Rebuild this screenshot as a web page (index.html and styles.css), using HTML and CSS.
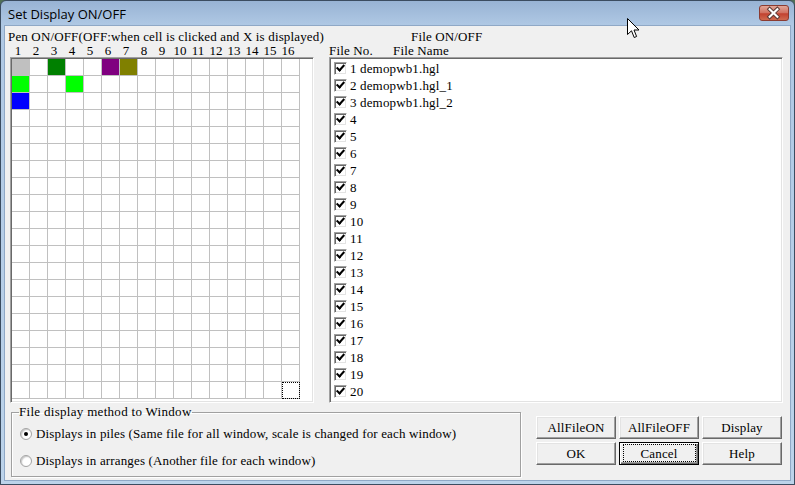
FILE: index.html
```html
<!DOCTYPE html>
<html lang="en">

<head>
    <meta charset="UTF-8">
    <title>Set Display ON/OFF</title>
    <link rel="stylesheet" href="styles.css">
</head>

<body>
    <div class="window">
        <div class="titlebar">
            <span class="title">Set Display ON/OFF</span>
            <span class="close">
                <svg width="30" height="16" viewBox="0 0 30 16">
                    <path d="M11 4 L19 12 M19 4 L11 12" stroke="#5a3a36" stroke-width="4.2" stroke-linecap="square" />
                    <path d="M11 4 L19 12 M19 4 L11 12" stroke="#fff" stroke-width="2.2" stroke-linecap="square" />
                </svg>
            </span>
        </div>
        <div class="client">
            <div class="top">
                <div class="pen-panel">
                    <div class="caption">Pen ON/OFF(OFF:when cell is clicked and X is displayed)</div>
                    <div class="nums">
                        <span>1</span><span>2</span><span>3</span><span>4</span><span>5</span><span>6</span><span>7</span><span>8</span>
                        <span>9</span><span>10</span><span>11</span><span>12</span><span>13</span><span>14</span><span>15</span><span>16</span>
                    </div>
                    <div class="pen-box">
                        <div class="pen-grid">
                            <i class="pen c-silver at-1-1"></i>
                            <i class="pen c-green at-1-3"></i>
                            <i class="pen c-purple at-1-6"></i>
                            <i class="pen c-olive at-1-7"></i>
                            <i class="pen c-lime at-2-1"></i>
                            <i class="pen c-lime at-2-4"></i>
                            <i class="pen c-blue at-3-1"></i>
                            <i class="focus at-20-16"></i>
                        </div>
                    </div>
                </div>
                <div class="file-panel">
                    <div class="caption file-title">File ON/OFF</div>
                    <div class="file-head"><span class="col-no">File No.</span><span>File Name</span></div>
                    <div class="file-list">
                        <div class="item"><span class="check"></span>1 demopwb1.hgl</div>
                        <div class="item"><span class="check"></span>2 demopwb1.hgl_1</div>
                        <div class="item"><span class="check"></span>3 demopwb1.hgl_2</div>
                        <div class="item"><span class="check"></span>4</div>
                        <div class="item"><span class="check"></span>5</div>
                        <div class="item"><span class="check"></span>6</div>
                        <div class="item"><span class="check"></span>7</div>
                        <div class="item"><span class="check"></span>8</div>
                        <div class="item"><span class="check"></span>9</div>
                        <div class="item"><span class="check"></span>10</div>
                        <div class="item"><span class="check"></span>11</div>
                        <div class="item"><span class="check"></span>12</div>
                        <div class="item"><span class="check"></span>13</div>
                        <div class="item"><span class="check"></span>14</div>
                        <div class="item"><span class="check"></span>15</div>
                        <div class="item"><span class="check"></span>16</div>
                        <div class="item"><span class="check"></span>17</div>
                        <div class="item"><span class="check"></span>18</div>
                        <div class="item"><span class="check"></span>19</div>
                        <div class="item"><span class="check"></span>20</div>
                    </div>
                </div>
            </div>
            <div class="bottom">
                <fieldset class="method">
                    <legend>File display method to Window</legend>
                    <div class="option"><span class="radio on"></span>Displays in piles (Same file for all window, scale is changed for each window)</div>
                    <div class="option"><span class="radio"></span>Displays in arranges (Another file for each window)</div>
                </fieldset>
                <div class="buttons">
                    <button class="btn">AllFileON</button>
                    <button class="btn">AllFileOFF</button>
                    <button class="btn">Display</button>
                    <button class="btn">OK</button>
                    <button class="btn default">Cancel</button>
                    <button class="btn">Help</button>
                </div>
            </div>
        </div>
        <svg class="cursor" width="14" height="21" viewBox="0 0 14 21">
            <path d="M0.5 0.5 L0.5 16.5 L4.5 12.8 L7.2 19.5 L9.6 18.5 L7 12 L12 12 Z" fill="#fff" stroke="#000" stroke-width="1" />
        </svg>
    </div>
</body>

</html>
```

FILE: styles.css
```css
body {
    margin: 0;
    background: #4f6f56;
    font-family: "Liberation Serif", "Times New Roman", serif;
    font-size: 13px;
    letter-spacing: 0.15px;
    color: #000;
}

.window {
    position: relative;
    width: 795px;
    height: 485px;
    box-sizing: border-box;
    border: 1px solid #3b4c60;
    border-radius: 6px 6px 0 0;
    background: linear-gradient(#98b3d4, #afc8e4 24px, #bcd3ea);
    padding: 0 3px 3px;
    display: flex;
    flex-direction: column;
}

.titlebar {
    height: 24px;
    display: flex;
    align-items: center;
    justify-content: space-between;
    padding-left: 4px;
}

.title {
    font-family: "Open Sans", "Noto Sans", sans-serif;
    font-size: 13px;
    letter-spacing: 0;
    padding-top: 1px;
}

.close {
    width: 30px;
    height: 16px;
    box-sizing: border-box;
    margin-right: 2px;
    border: 1px solid #8b3b31;
    border-radius: 3px;
    background: linear-gradient(#e2a597, #d0705f 50%, #c2412f 55%, #cf6a4f);
    display: flex;
}

.close svg {
    margin: -1px 0 0 -1px;
}

.client {
    flex: 1;
    border: 1px solid #8fa8c6;
    background: #f0f0f0;
}

.top {
    display: flex;
}

.pen-panel {
    margin-left: 3px;
    width: 306px;
}

.caption {
    padding-top: 3px;
    line-height: 15px;
    white-space: nowrap;
}

.nums {
    margin-left: 1px;
    height: 13px;
    line-height: 13px;
    display: flex;
    letter-spacing: 0;
}

.nums span {
    width: 18px;
    text-align: center;
}

.pen-box,
.file-list {
    box-sizing: border-box;
    height: 346px;
    background: #fff;
    border: 1px solid;
    border-color: #a0a0a0 #fff #fff #a0a0a0;
    box-shadow: inset 1px 1px #696969, inset -1px -1px #e3e3e3;
}

.pen-box {
    margin-left: 2px;
    width: 304px;
    padding: 1px;
}

.pen-grid {
    display: grid;
    grid-template-columns: repeat(16, 18px);
    grid-template-rows: repeat(20, 17px);
    width: 288px;
    height: 340px;
    background-image:
        linear-gradient(to right, transparent 17px, #c0c0c0 17px),
        linear-gradient(to bottom, transparent 16px, #c0c0c0 16px);
    background-size: 18px 17px;
}

.pen {
    width: 17px;
    height: 16px;
}

.focus {
    box-sizing: border-box;
    border: 1px dotted #000;
}

.c-silver { background: #c0c0c0; }
.c-green { background: #008000; }
.c-purple { background: #800080; }
.c-olive { background: #808000; }
.c-lime { background: #00ff00; }
.c-blue { background: #0000ff; }

.at-1-1 { grid-row: 1; grid-column: 1; }
.at-1-3 { grid-row: 1; grid-column: 3; }
.at-1-6 { grid-row: 1; grid-column: 6; }
.at-1-7 { grid-row: 1; grid-column: 7; }
.at-2-1 { grid-row: 2; grid-column: 1; }
.at-2-4 { grid-row: 2; grid-column: 4; }
.at-3-1 { grid-row: 3; grid-column: 1; }
.at-20-16 { grid-row: 20; grid-column: 16; }

.file-panel {
    margin-left: 15px;
}

.file-title {
    margin-left: 82px;
}

.file-head {
    height: 13px;
    line-height: 13px;
    display: flex;
}

.col-no {
    width: 64px;
}

.file-list {
    width: 454px;
    padding: 2px 0 0 4px;
}

.item {
    height: 17px;
    display: flex;
    align-items: center;
}

.check {
    position: relative;
    width: 13px;
    height: 13px;
    box-sizing: border-box;
    margin-right: 3px;
    background: #fff;
    border: 1px solid;
    border-color: #a0a0a0 #fff #fff #a0a0a0;
    box-shadow: inset 1px 1px #696969, inset -1px -1px #e3e3e3;
}

.check::after {
    content: "";
    position: absolute;
    left: 3px;
    top: 0px;
    width: 3px;
    height: 6px;
    border: solid #000;
    border-width: 0 2px 2px 0;
    transform: rotate(42deg);
}

.bottom {
    display: flex;
    align-items: flex-start;
}

.method {
    margin: 2px 0 0 6px;
    padding: 0 0 0 8px;
    width: 510px;
    height: 72px;
    box-sizing: border-box;
    border: 1px solid #a0a0a0;
    box-shadow: 1px 1px #fff, inset 1px 1px #fff;
}

.method legend {
    margin-left: -1px;
    padding: 0;
    line-height: 14px;
    letter-spacing: 0.3px;
}

.option {
    height: 20px;
    display: flex;
    align-items: center;
    white-space: nowrap;
}

.option:first-of-type {
    margin-top: 5px;
}

.option + .option {
    margin-top: 7px;
}

.radio {
    position: relative;
    width: 12px;
    height: 12px;
    box-sizing: border-box;
    margin-right: 4px;
    border-radius: 50%;
    border: 1px solid #a4a4a4;
    background: radial-gradient(circle at 60% 60%, #fff 40%, #e6e6e6);
    box-shadow: inset 1px 1px 1px #c8c8c8;
}

.radio.on::after {
    content: "";
    position: absolute;
    left: 3px;
    top: 3px;
    width: 4px;
    height: 4px;
    border-radius: 50%;
    background: #000;
}

.buttons {
    margin: 13px 0 0 15px;
    display: grid;
    grid-template-columns: repeat(3, 80px);
    grid-auto-rows: 23px;
    gap: 3px;
}

.btn {
    position: relative;
    margin: 0;
    padding: 0;
    font: inherit;
    letter-spacing: inherit;
    color: #000;
    background: #f0f0f0;
    border: 1px solid;
    border-color: #fff #696969 #696969 #fff;
    box-shadow: inset -1px -1px #a0a0a0, inset 1px 1px #e3e3e3;
}

.btn.default {
    border-color: #000;
    box-shadow: inset 1px 1px #fff, inset -1px -1px #696969, inset -2px -2px #a0a0a0;
}

.btn.default::after {
    content: "";
    position: absolute;
    left: 3px;
    right: 2px;
    top: 1px;
    bottom: 2px;
    border: 1px dotted #000;
}

.cursor {
    position: absolute;
    left: 626px;
    top: 17px;
}
```
